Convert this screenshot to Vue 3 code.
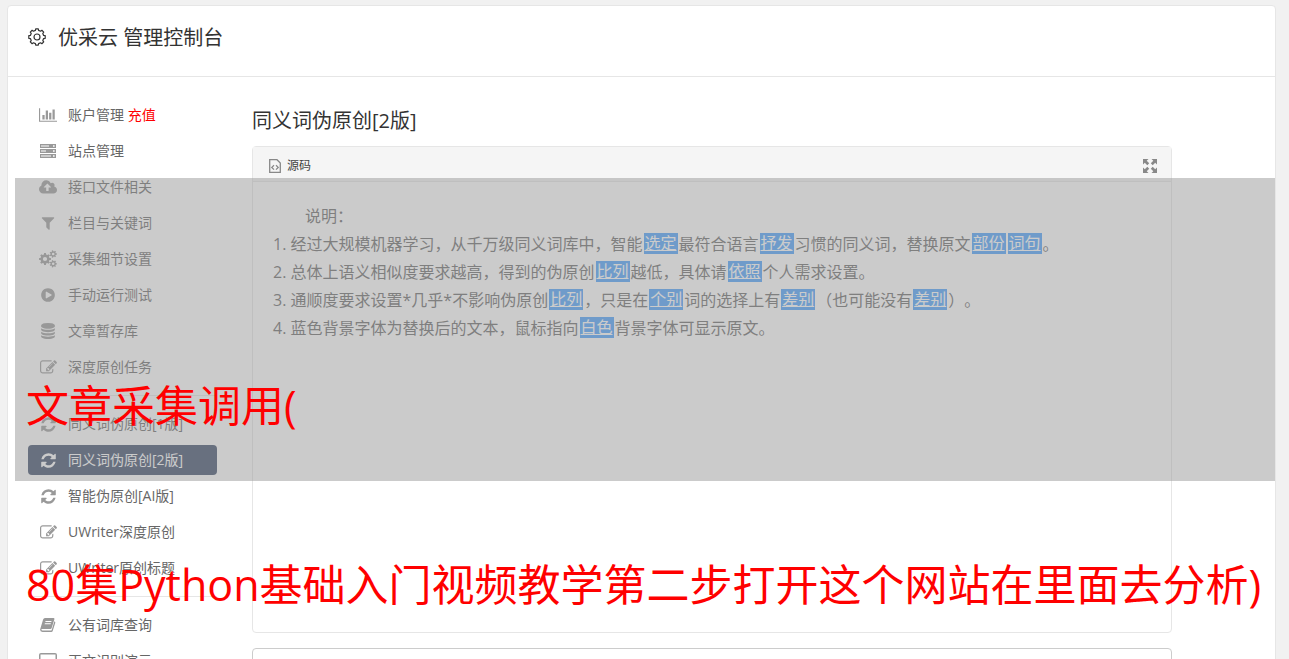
<script setup>
const gear = (cx, cy, outer, inner, teeth) => {
  const pts = []
  const step = (Math.PI * 2) / teeth
  for (let i = 0; i < teeth; i++) {
    const a = i * step
    for (const [off, r] of [[-0.3, inner], [-0.2, outer], [0.2, outer], [0.3, inner]]) {
      pts.push(`${(cx + r * Math.cos(a + off * step)).toFixed(2)} ${(cy + r * Math.sin(a + off * step)).toFixed(2)}`)
    }
  }
  return `M${pts.join('L')}Z`
}
const hole = (cx, cy, r) => `M${cx - r} ${cy}a${r} ${r} 0 1 0 ${2 * r} 0a${r} ${r} 0 1 0 ${-2 * r} 0Z`

const cogsPath =
  gear(6, 9, 6, 4.6, 8) + hole(6, 9, 2.1) +
  gear(14.2, 4, 3.7, 2.7, 7) + hole(14.2, 4, 1.3) +
  gear(14.2, 13.8, 3.7, 2.7, 7) + hole(14.2, 13.8, 1.3)
const titleGear = gear(9, 9, 8.3, 6.8, 8)

const edit = { box: '0 0 1792 1792', w: 17, h: 17, d: 'M888 1184l116-116-152-152-116 116v56h96v96h56zm440-720q-16-16-33 1l-350 350q-17 17-1 33t33-1l350-350q17-17 1-33zm80 594v190q0 119-84.5 203.5t-203.5 84.5h-832q-119 0-203.5-84.5t-84.5-203.5v-832q0-119 84.5-203.5t203.5-84.5h832q63 0 117 25 15 7 18 23 3 17-9 29l-49 49q-14 14-32 8-23-6-45-6h-832q-66 0-113 47t-47 113v832q0 66 47 113t113 47h832q66 0 113-47t47-113v-126q0-13 9-22l64-64q15-15 35-7t20 29zm-96-738l288 288-672 672h-288v-288zm444 132l-92 92-288-288 92-92q28-28 68-28t68 28l152 152q28 28 28 68t-28 68z' }
const refresh = { box: '0 0 1792 1792', w: 17, h: 17, d: 'M1639 1056q0 5-1 7-64 268-268 434.5t-478 166.5q-146 0-282.5-55t-243.5-157l-129 129q-19 19-45 19t-45-19-19-45v-448q0-26 19-45t45-19h448q26 0 45 19t19 45-19 45l-137 137q71 66 161 102t187 36q134 0 250-65t186-179q11-17 53-117 8-23 30-23h192q13 0 22.5 9.5t9.5 22.5zm25-800v448q0 26-19 45t-45 19h-448q-26 0-45-19t-19-45 19-45l138-138q-148-137-349-137-134 0-250 65t-186 179q-11 17-53 117-8 23-30 23h-199q-13 0-22.5-9.5t-9.5-22.5v-7q65-268 270-434.5t480-166.5q146 0 284 55.5t245 156.5l130-129q19-19 45-19t45 19 19 45z' }
const chart = { box: '0 0 2048 1792', w: 18, h: 16, d: 'M640 896v512h-256v-512h256zm384-512v1024h-256v-1024h256zm1024 1152v128h-2048v-1536h128v1408h1920zm-640-896v768h-256v-768h256zm384-384v1152h-256v-1152h256z' }
const server = { box: '0 0 16 14', w: 16, h: 14, d: 'M0 0h16v4h-16zM1 1.5v1h8v-1zM13 1.2v1.6h1.6v-1.6zM0 5h16v4h-16zM1 6.5v1h5v-1zM13 6.2v1.6h1.6v-1.6zM0 10h16v4h-16zM1 11.5v1h10v-1zM13 11.2v1.6h1.6v-1.6z' }
const cloud = { box: '0 0 1920 1792', w: 18, h: 17, d: 'M1280 864q0-14-9-23l-352-352q-9-9-23-9t-23 9l-351 351q-10 12-10 24 0 14 9 23t23 9h224v352q0 13 9.5 22.5t22.5 9.5h192q13 0 22.5-9.5t9.5-22.5v-352h224q13 0 22.5-9.5t9.5-22.5zm640 288q0 159-112.5 271.5t-271.5 112.5h-1088q-185 0-316.5-131.5t-131.5-316.5q0-130 70-240t188-165q-2-30-2-43 0-212 150-362t362-150q156 0 285.5 87t188.5 231q71-62 166-62 106 0 181 75t75 181q0 76-41 138 130 31 213.5 135.5t83.5 238.5z' }
const filter = { box: '0 0 1792 1792', w: 16, h: 16, d: 'M1595 295q17 41-14 70l-493 493v742q0 42-39 59-13 5-25 5-27 0-45-19l-256-256q-19-19-19-45v-486l-493-493q-31-29-14-70 17-39 59-39h1280q42 0 59 39z' }
const play = { box: '0 0 1792 1792', w: 16, h: 16, d: 'M896 128q209 0 385.5 103t279.5 279.5 103 385.5-103 385.5-279.5 279.5-385.5 103-385.5-103-279.5-279.5-103-385.5 103-385.5 279.5-279.5 385.5-103zm384 823q32-18 32-55t-32-55l-544-320q-31-19-64-1-32 19-32 56v640q0 37 32 56 16 8 32 8 17 0 32-9z' }
const database = { box: '0 0 1792 1792', w: 16, h: 16, d: 'M896 768q237 0 443-43t325-127v170q0 69-103 128t-280 93.5-385 34.5-385-34.5-280-93.5-103-128v-170q119 84 325 127t443 43zm0 768q237 0 443-43t325-127v170q0 69-103 128t-280 93.5-385 34.5-385-34.5-280-93.5-103-128v-170q119 84 325 127t443 43zm0-384q237 0 443-43t325-127v170q0 69-103 128t-280 93.5-385 34.5-385-34.5-280-93.5-103-128v-170q119 84 325 127t443 43zm0-1152q208 0 385 34.5t280 93.5 103 128v128q0 69-103 128t-280 93.5-385 34.5-385-34.5-280-93.5-103-128v-128q0-69 103-128t280-93.5 385-34.5z' }
const book = { box: '0 0 16 14', w: 16, h: 14, d: 'M5 0h8.500q1.200 0 .9 1.200l-2.800 9q-.3 .8-1.200 .8h-8.400q-.8 0-.6.8t1.100.8h8.200q.8 0 1-.7l2.700-8.700q1.200.5.900 1.500l-2.600 8.400q-.3.900-1.400.900h-8.800q-2.500-.3-2.400-2.600l3-9.800q.5-1.600 1.900-1.600zM5.600 3l-.3 1h6l.3-1zM4.900 5.200l-.3 1h6l.3-1z' }
const laptop = { box: '0 0 18 16', w: 18, h: 16, d: 'M2 0h14q2 0 2 2v10q0 2-2 2h-14q-2 0-2-2v-10q0-2 2-2zM1.500 1.500v9h15v-9z' }

const groups = [
  [
    { text: '账户管理', tag: '充值', icon: chart },
    { text: '站点管理', icon: server },
    { text: '接口文件相关', icon: cloud },
    { text: '栏目与关键词', icon: filter },
    { text: '采集细节设置', icon: { box: '0 0 18 18', w: 18, h: 18, d: cogsPath } },
    { text: '手动运行测试', icon: play },
    { text: '文章暂存库', icon: database },
    { text: '深度原创任务', icon: edit },
  ],
  [
    { text: '同义词伪原创[1版]', icon: refresh },
    { text: '同义词伪原创[2版]', icon: refresh, active: true },
    { text: '智能伪原创[AI版]', icon: refresh },
    { text: 'UWriter深度原创', icon: edit },
    { text: 'UWriter原创标题', icon: edit },
  ],
  [
    { text: '公有词库查询', icon: book },
    { text: '正文识别演示', icon: laptop },
  ],
]

const lines = [
  ['1. 经过大规模机器学习，从千万级同义词库中，智能', { w: '选定' }, '最符合语言', { w: '抒发' }, '习惯的同义词，替换原文', { w: '部份' }, { w: '词句' }, '。'],
  ['2. 总体上语义相似度要求越高，得到的伪原创', { w: '比列' }, '越低，具体请', { w: '依照' }, '个人需求设置。'],
  ['3. 通顺度要求设置*几乎*不影响伪原创', { w: '比列' }, '，只是在', { w: '个别' }, '词的选择上有', { w: '差别' }, '（也可能没有', { w: '差别' }, '）。'],
  ['4. 蓝色背景字体为替换后的文本，鼠标指向', { w: '白色' }, '背景字体可显示原文。'],
]
</script>

<template>
  <div class="page">
    <div class="card">
      <header class="top">
        <svg viewBox="0 0 18 18" width="18" height="18" fill="none" stroke="currentColor" stroke-width="1.2" stroke-linejoin="round">
          <path :d="titleGear" />
          <circle cx="9" cy="9" r="3" />
        </svg>
        <h1>优采云 管理控制台</h1>
      </header>
      <div class="body">
        <nav class="side">
          <ul v-for="(group, g) in groups" :key="g" class="group">
            <li v-for="item in group" :key="item.text">
              <a href="#" class="item" :class="{ active: item.active }">
                <span class="icon">
                  <svg :viewBox="item.icon.box" :width="item.icon.w" :height="item.icon.h"><path :d="item.icon.d" fill="currentColor" fill-rule="evenodd" /></svg>
                </span>
                <span class="label">{{ item.text }} <span v-if="item.tag" class="tag">{{ item.tag }}</span></span>
              </a>
            </li>
          </ul>
        </nav>
        <main class="main">
          <h2>同义词伪原创[2版]</h2>
          <section class="panel">
            <div class="bar">
              <button type="button" class="source">
                <svg viewBox="0 0 12 14" width="12" height="14" fill="none" stroke="#888" stroke-width="1.300">
                  <path d="M.7.700h7.300l3.300 3.300v9.300h-10.600z" />
                  <path d="M5 6.200l-2.200 2.200 2.200 2.200M7 6.200l2.200 2.200-2.200 2.200" />
                </svg>
                <span class="label">源码</span>
              </button>
              <button type="button" class="expand" aria-label="全屏">
                <svg viewBox="0 0 14 14" width="14" height="14" fill="#888">
                  <path d="M0 0h5.500l-1.800 1.800 2.500 2.500-1.900 1.900-2.500-2.500-1.800 1.800zM14 0v5.500l-1.800-1.800-2.500 2.500-1.900-1.900 2.500-2.500-1.800-1.800zM0 14v-5.500l1.800 1.800 2.500-2.500 1.900 1.900-2.500 2.500 1.800 1.800zM14 14h-5.500l1.800-1.800-2.500-2.500 1.900-1.900 2.500 2.500 1.800-1.800z" />
                </svg>
              </button>
            </div>
            <div class="text">
              <p class="lead">说明：</p>
              <p v-for="(line, i) in lines" :key="i">
                <template v-for="(part, j) in line" :key="j"><a v-if="part.w" href="#" class="word">{{ part.w }}</a><template v-else>{{ part }}</template></template>
              </p>
            </div>
          </section>
          <textarea class="result" aria-label="结果"></textarea>
        </main>
      </div>
    </div>
    <div class="shade"></div>
    <p class="caption first">文章采集调用(</p>
    <p class="caption second">80集Python基础入门视频教学第二步打开这个网站在里面去分析)</p>
  </div>
</template>

<style>
body {
  background: #f1f1f1;
}
</style>

<style scoped>
* {
  box-sizing: border-box;
}
.page {
  position: relative;
  height: 100vh;
  overflow: hidden;
  padding: 5px 13px 0 7px;
  font-family: "Open Sans", "Noto Sans CJK SC", sans-serif;
  font-size: 14px;
  color: #666;
  text-spacing-trim: space-all;
}
h1, h2, p, ul {
  margin: 0;
  padding: 0;
  font-weight: 400;
}
.card {
  min-height: 800px;
  background: #fff;
  border: 1px solid #e6e6e6;
  border-radius: 4px;
}
.top {
  display: flex;
  align-items: center;
  gap: 12px;
  height: 71px;
  padding: 0 20px 9px;
  border-bottom: 1px solid #e6e6e6;
  color: #333;
}
h1, h2 {
  font-size: 20px;
  line-height: 28px;
  color: #333;
}
h1 {
  padding-top: 2px;
}
.body {
  display: flex;
  gap: 35px;
  padding: 23px 103px 0 20px;
}
.side {
  flex: 0 0 189px;
}
.group {
  display: flex;
  flex-direction: column;
  gap: 6px;
  list-style: none;
}
.group + .group {
  margin-top: 13px;
  padding-top: 13px;
  border-top: 1px solid #e6e6e6;
}
.item {
  display: flex;
  align-items: center;
  height: 30px;
  border-radius: 4px;
  color: #666;
  text-decoration: none;
  white-space: nowrap;
}
.icon {
  display: flex;
  justify-content: center;
  width: 40px;
  color: #999;
}
.label {
  padding-bottom: 2px;
}
.tag {
  color: #f00;
}
.active {
  background: #394967;
}
.active, .active .icon {
  color: #fff;
}
.main {
  flex: 1;
  min-width: 0;
}
h2 {
  padding-top: 7px;
}
.panel {
  height: 487px;
  margin: 11px 0 15px;
  border: 1px solid #e6e6e6;
  border-radius: 4px;
}
.bar {
  display: flex;
  justify-content: space-between;
  align-items: center;
  height: 35px;
  padding: 4px 14px 0 16px;
  background: #f5f5f5;
  border-bottom: 1px solid #e6e6e6;
}
button {
  display: flex;
  align-items: center;
  gap: 6px;
  padding: 0;
  border: 0;
  background: none;
  font-family: inherit;
  font-size: 12px;
  color: #444;
}
.text {
  padding: 20px;
  font-size: 16px;
  line-height: 28px;
}
.lead {
  text-indent: 32px;
}
.word {
  display: inline-block;
  height: 21px;
  margin: 3px 1px 0;
  padding: 0 1px;
  background: #479ffd;
  color: #fff;
  line-height: 21px;
  vertical-align: top;
}
.result {
  display: block;
  width: 100%;
  height: 120px;
  border: 1px solid #ccc;
  border-radius: 4px;
  resize: none;
}
.shade {
  position: absolute;
  top: 178px;
  left: 15px;
  right: 14px;
  height: 303px;
  background: rgba(151, 151, 151, 0.5);
}
.caption {
  position: absolute;
  left: 26px;
  font-size: 43px;
  line-height: 60px;
  color: #f00;
  white-space: nowrap;
}
.first {
  top: 376px;
}
.second {
  top: 555px;
}
</style>
